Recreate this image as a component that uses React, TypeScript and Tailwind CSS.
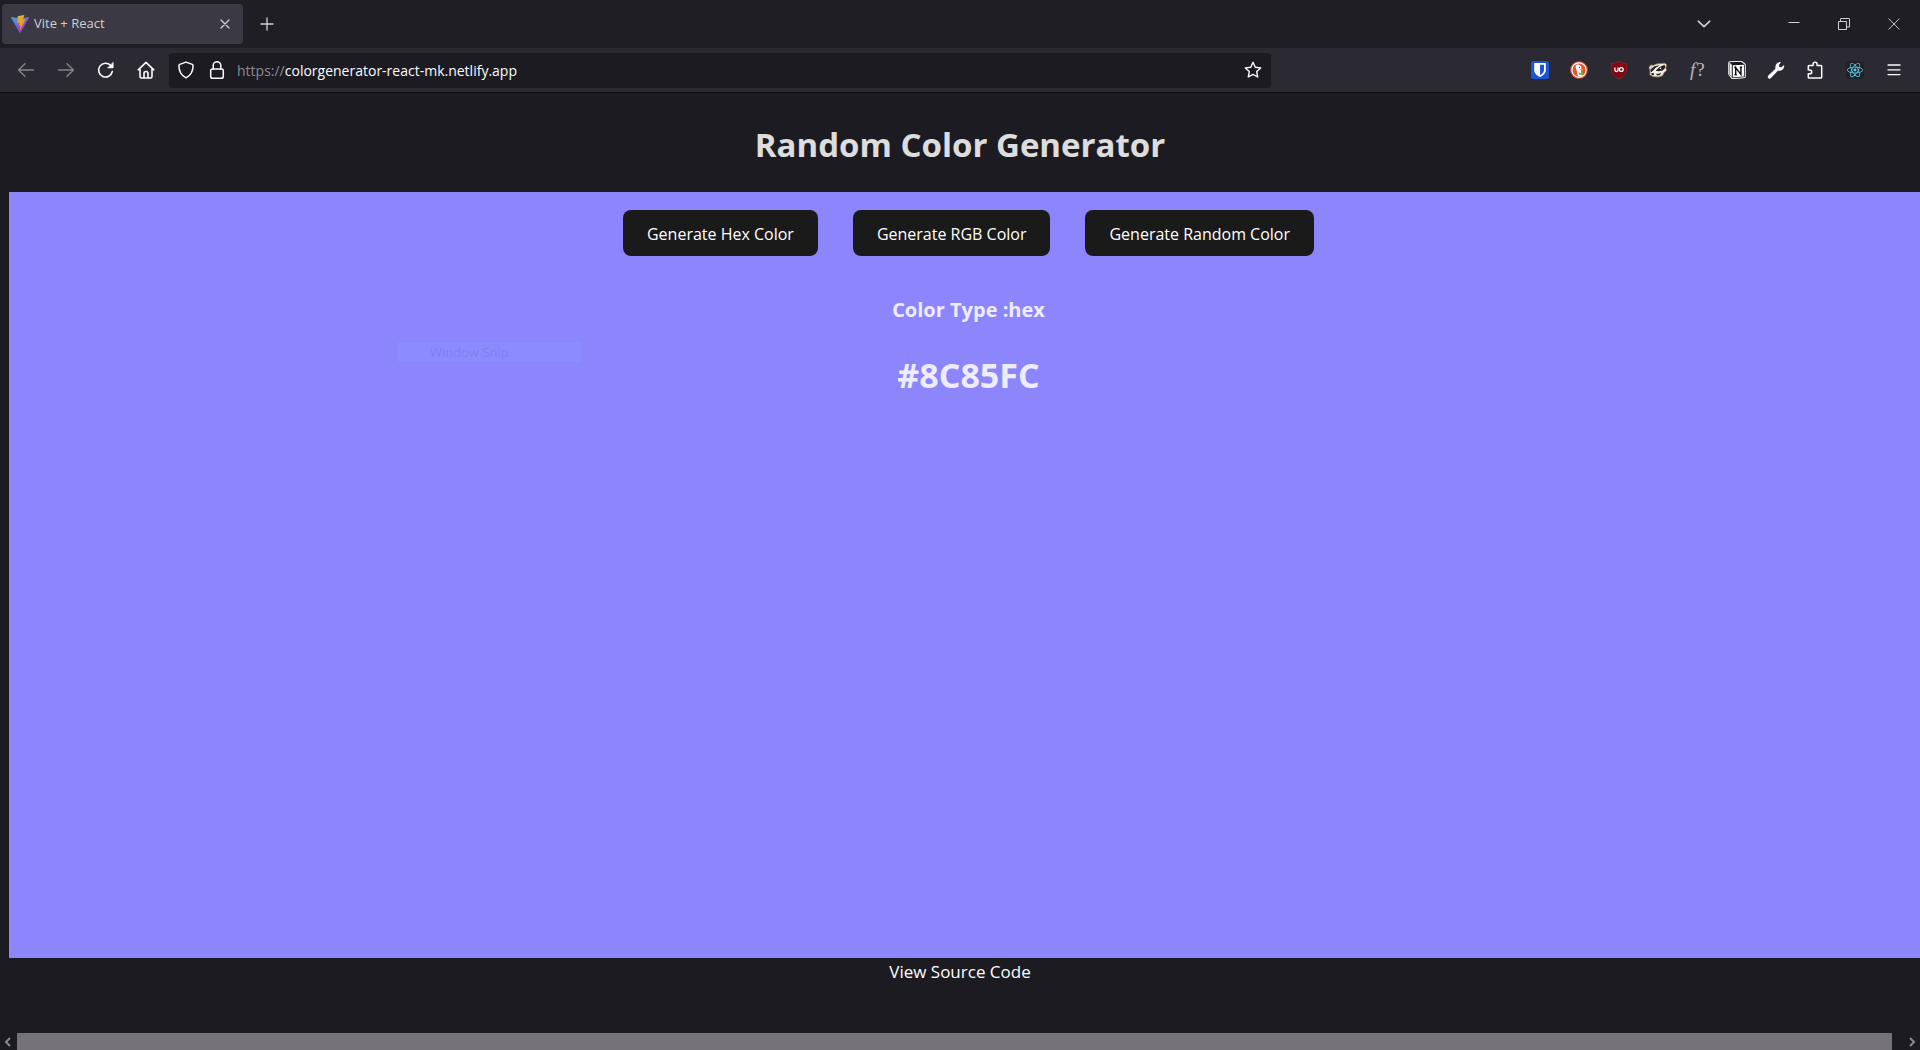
import { useState } from "react";
import type { ReactNode } from "react";
import { SiReact } from "react-icons/si";

type IconButtonProps = { label: string; className?: string; children: ReactNode };

function IconButton({ label, className = "w-9 h-8", children }: IconButtonProps) {
  return (
    <button type="button" aria-label={label} className={`flex shrink-0 items-center justify-center ${className}`}>
      {children}
    </button>
  );
}

const line = {
  width: 18,
  height: 18,
  viewBox: "0 0 18 18",
  fill: "none",
  stroke: "currentColor",
  strokeWidth: 1.4,
  strokeLinecap: "round",
  strokeLinejoin: "round",
} as const;

function ViteLogo() {
  return (
    <svg width="18" height="18" viewBox="0 0 256 257" className="shrink-0" aria-hidden="true">
      <defs>
        <linearGradient id="vite-body" x1="-.8%" x2="57.6%" y1="7.7%" y2="78.4%">
          <stop offset="0%" stopColor="#41a6d6" />
          <stop offset="100%" stopColor="#a03fd0" />
        </linearGradient>
        <linearGradient id="vite-bolt" x1="43.4%" x2="50.3%" y1="2.2%" y2="89%">
          <stop offset="0%" stopColor="#d9bd45" />
          <stop offset="20%" stopColor="#dcae2a" />
          <stop offset="100%" stopColor="#f09020" />
        </linearGradient>
      </defs>
      <path fill="url(#vite-body)" d="M255.153 37.938L134.897 252.976c-2.483 4.44-8.862 4.466-11.382.048L.875 37.958c-2.746-4.814 1.371-10.646 6.827-9.67l120.385 21.517a6.537 6.537 0 0 0 2.322-.004l117.867-21.483c5.438-.991 9.574 4.796 6.877 9.62Z" />
      <path fill="url(#vite-bolt)" d="M185.432.063L96.44 17.501a3.268 3.268 0 0 0-2.634 3.014l-5.474 92.456a3.268 3.268 0 0 0 3.997 3.378l24.777-5.718c2.318-.535 4.413 1.507 3.936 3.838l-7.361 36.047c-.495 2.426 1.782 4.5 4.151 3.78l15.304-4.649c2.372-.72 4.652 1.36 4.15 3.788l-11.698 56.621c-.732 3.542 3.979 5.473 5.943 2.437l1.313-2.028l72.516-144.72c1.215-2.423-.88-5.186-3.54-4.672l-25.505 4.922c-2.396.462-4.435-1.77-3.759-4.114l16.646-57.705c.677-2.35-1.37-4.583-3.769-4.113Z" />
    </svg>
  );
}

function TabBar() {
  return (
    <div className="flex h-12 items-center bg-[#1f1e25] text-[#d0cfd4]">
      <div className="ml-[2px] flex h-10 w-[241px] items-center rounded bg-[#3b3943] pl-[9px] pr-[6px]">
        <ViteLogo />
        <span className="ml-[5px] flex-1 text-[13px]">Vite + React</span>
        <IconButton label="Close tab" className="h-6 w-6">
          <svg width="10" height="10" viewBox="0 0 10 10" fill="none" stroke="currentColor" strokeWidth="1.3" strokeLinecap="round">
            <path d="M1 1l8 8M9 1L1 9" />
          </svg>
        </IconButton>
      </div>
      <IconButton label="New tab" className="ml-[6px] h-9 w-9">
        <svg width="14" height="14" viewBox="0 0 14 14" fill="none" stroke="currentColor" strokeWidth="1.3" strokeLinecap="round">
          <path d="M7 1v12M1 7h12" />
        </svg>
      </IconButton>
      <div className="ml-auto mr-px flex">
        <IconButton label="List all tabs" className="mr-[40px] h-12 w-[50px]">
          <svg width="14" height="8" viewBox="0 0 14 8" fill="none" stroke="currentColor" strokeWidth="1.6" strokeLinecap="round" strokeLinejoin="round">
            <path d="M1.2 1.2L7 6.6l5.800-5.400" />
          </svg>
        </IconButton>
        <IconButton label="Minimize" className="h-12 w-[50px]">
          <svg width="12" height="12" viewBox="0 0 12 12" fill="none" stroke="currentColor">
            <path d="M0.500 4.500h11" />
          </svg>
        </IconButton>
        <IconButton label="Restore" className="h-12 w-[50px]">
          <svg width="12" height="12" viewBox="0 0 12 12" fill="none" stroke="currentColor">
            <path d="M0.500 3.500h8v8h-8zM2.500 3.500v-2.500q0-.5 .5-.5h8q.5 0 .5 .5v8h-3" />
          </svg>
        </IconButton>
        <IconButton label="Close window" className="h-12 w-[50px]">
          <svg width="12" height="12" viewBox="0 0 12 12" fill="none" stroke="currentColor" strokeWidth="0.9">
            <path d="M0.500 0.500l11 11M11.500 0.500l-11 11" />
          </svg>
        </IconButton>
      </div>
    </div>
  );
}

function AddressBar() {
  const [address, setAddress] = useState("colorgenerator-react-mk.netlify.app");
  return (
    <div className="ml-[5px] flex h-[35px] min-w-0 flex-1 items-center rounded bg-[#1c1b22] text-[#fbfbfe]">
      <IconButton label="Tracking protection" className="ml-px h-8 w-8">
        <svg {...line} strokeWidth={1.5}>
          <path d="M9 1.100L15.300 3.400q.8.300.8 1.200C16.100 10 14 14.500 9 16.900 4 14.500 1.900 10 1.900 4.600q0-.9.8-1.200z" />
        </svg>
      </IconButton>
      <IconButton label="Site information" className="h-8 w-[30px]">
        <svg {...line} strokeWidth={1.5}>
          <rect x="2.700" y="8" width="12.600" height="9.200" rx="1.800" />
          <path d="M5.200 8V4.500a3.800 3.800 0 0 1 7.600 0V8" />
        </svg>
      </IconButton>
      <label htmlFor="address" className="ml-[5px] text-[14px] text-[#8b8a91]">https://</label>
      <input
        id="address"
        type="text"
        value={address}
        onChange={(e) => setAddress(e.target.value)}
        className="min-w-0 flex-1 bg-transparent text-[14px] outline-none"
      />
      <IconButton label="Bookmark this page">
        <svg {...line}>
          <path d="M9 1.300l2.250 4.900 5.450.7-4 3.700 1 5.400L9 13.400 4.300 16l1-5.400-4-3.700 5.450-.7z" />
        </svg>
      </IconButton>
    </div>
  );
}

function Extensions() {
  const size = "h-8 w-8";
  return (
    <div className="ml-[253px] mr-[10px] flex w-[386px] shrink-0 justify-between">
      <IconButton label="Bitwarden" className={size}>
        <svg width="18" height="18" viewBox="0 0 18 18">
          <rect width="18" height="18" rx="2.500" fill="#1a56d6" />
          <path d="M3.200 2h11.600v7.200c0 3.400-3.300 5.600-5.800 6.900-2.500-1.300-5.800-3.500-5.800-6.900z" fill="#fff" />
          <path d="M9 3.700h4v5.500c0 2.300-2.300 4-4 4.900z" fill="#1a56d6" />
        </svg>
      </IconButton>
      <IconButton label="DuckDuckGo" className={size}>
        <svg width="18" height="18" viewBox="0 0 18 18">
          <circle cx="9" cy="9" r="8.800" fill="#df5833" />
          <circle cx="9" cy="9" r="7.100" fill="none" stroke="#fff" strokeWidth="1.100" />
          <path d="M5.600 5.500C5.800 3.800 7.300 3.200 8.600 3.600c2.200.4 3 1.900 2.700 4.400l-.3 1.900 1 4.800q-2 1-4 .3z" fill="#fff" />
          <path d="M9 8.300q2-.7 3.700.1-.6 1.200-3 1.200z" fill="#f9b52e" />
          <path d="M8.500 11.300l2 .8 2.200-1v3l-2.200-.7-1.600.5z" fill="#4cba3c" />
          <circle cx="9.500" cy="6.400" r=".7" fill="#2d4f8e" />
        </svg>
      </IconButton>
      <IconButton label="uBlock Origin" className={size}>
        <svg width="18" height="18" viewBox="0 0 18 18">
          <path d="M9 .2c2 1.500 4.500 2.200 7.700 2.300v5.800c0 4.500-3.500 7.500-7.700 9.500-4.200-2-7.700-5-7.700-9.500V2.500C4.500 2.400 7 1.700 9 .2z" fill="#800610" stroke="#a32a30" strokeWidth=".6" />
          <path d="M4.900 6.500v2.500q0 1.500 1.600 1.500T8.100 9V6.500" fill="none" stroke="#fff" strokeWidth="1.300" />
          <circle cx="11.300" cy="8.500" r="1.900" fill="none" stroke="#fff" strokeWidth="1.300" />
        </svg>
      </IconButton>
      <IconButton label="Privacy Badger" className={size}>
        <svg width="20" height="18" viewBox="0 0 20 18">
          <path d="M1 6.500L2.500 4l3 .3L9 2.800l4.500-.3L17 2.200l1.600 1.500-.6 3 .5 2.800-2.500 2.200-1.500 3-4 1.300-5.500-.3-3.300-2.200.4-2.700z" fill="#f3ede3" stroke="#8d7455" strokeWidth=".8" />
          <path d="M2 9l4-3.600L11.500 4l-3 3-5 4.300z" fill="#26221f" />
          <path d="M7.500 9.800L11 6.200l5.500-2.400 1 2.700-2.800 3-4 .8z" fill="#26221f" />
          <path d="M3.500 11.500L8 6.500l6-2.700-5.500 4.500-3.500 4z" fill="#fff" />
          <path d="M2.500 5.200l2.300.3-1.800 1.700z" fill="#caa573" />
          <circle cx="12.500" cy="7.300" r=".8" fill="#fff" />
          <path d="M3 12.500l2.500-.7.500 2.200-2 .2zM8 12.800q3 .6 5-1.300l-1 2.500-3 .6z" fill="#26221f" />
        </svg>
      </IconButton>
      <IconButton label="Font finder" className={`${size} gap-px font-['Liberation_Serif',serif] text-[19px] leading-5 text-[#b8b7bd]`}>
        <span className="italic">f</span>
        <span>?</span>
      </IconButton>
      <IconButton label="Notion Web Clipper" className={size}>
        <svg width="18" height="18" viewBox="0 0 18 18">
          <path d="M2 .7L12.500.3q.8 0 1.400.4l2.700 2.100q.7.500.7 1.400v11.300q0 1.200-1.300 1.300L5 17.600q-.9.100-1.500-.7L1.100 13.800q-.4-.6-.4-1.400V2.100Q.7.800 2 .7z" fill="#17161a" stroke="#e9e8ec" strokeWidth="1.100" />
          <path d="M1.500 1.500L3.800 3.800v12.400L1.500 13z" fill="#f2f2f4" />
          <path d="M4.800 4.300L16 3.800v11.800l-11.200.7z" fill="#fff" />
          <path d="M7.700 13.800V6.600l5.200 6.800V6.200M6.200 6.500h2.200M6.500 13.800h2.300M11.800 6.200h2.400" fill="none" stroke="#111" strokeWidth="1.500" />
        </svg>
      </IconButton>
      <IconButton label="Developer tools" className={size}>
        <svg width="18" height="18" viewBox="0 0 18 18" fill="#fbfbfe">
          <path d="M1.300 14.600L8.500 7.700C7.800 4.600 9.400 1.700 12.900 1.100l1.100.2-2 2.500.3 2.100 2.100.4 2.700-2.400.1 1.400c-.4 3.400-3.300 5.200-6.300 4.500l-6.900 7.200A1.750 1.750 0 0 1 1.300 14.600z" />
        </svg>
      </IconButton>
      <IconButton label="Extensions" className={size}>
        <svg {...line} strokeWidth={1.500}>
          <path d="M2.300 5.200q0-.8.800-.8h4V3.200a2 2 0 0 1 4 0v1.200h3.800q.8 0 .8.800v11q0 .8-.8.800H3.100q-.8 0-.8-.8v-3.400h1.500a1.900 1.900 0 0 0 0-3.800H2.300z" />
        </svg>
      </IconButton>
      <IconButton label="React Developer Tools" className={`${size} text-[#61cdea]`}>
        <span className="flex h-[18px] w-[18px] items-center justify-center rounded-sm bg-[#202228]">
          <SiReact size={16} />
        </span>
      </IconButton>
      <IconButton label="Open application menu" className={size}>
        <svg width="14" height="12" viewBox="0 0 14 12" fill="none" stroke="currentColor" strokeWidth="1.300" strokeLinecap="round">
          <path d="M1 1h12M1 5.800h12M1 10.600h12" />
        </svg>
      </IconButton>
    </div>
  );
}

function Toolbar() {
  return (
    <div className="flex h-[45px] items-center border-b border-[#0d0c12] bg-[#2b2a33] text-[#fbfbfe]">
      <nav aria-label="Browser navigation" className="ml-2 flex gap-1">
        <IconButton label="Back" className="h-8 w-9 text-[#85848a]">
          <svg {...line}><path d="M1.500 9h15M8 2.800L1.500 9 8 15.200" /></svg>
        </IconButton>
        <IconButton label="Forward" className="h-8 w-9 text-[#85848a]">
          <svg {...line}><path d="M16.500 9h-15M10 2.800L16.500 9 10 15.200" /></svg>
        </IconButton>
        <IconButton label="Reload">
          <svg {...line} strokeWidth={1.600}>
            <path d="M15.300 10.500A6.900 6.900 0 1 1 13.600 4.400" />
            <path d="M16.200 1.600v5.300h-5.300z" fill="currentColor" strokeWidth={0.600} />
          </svg>
        </IconButton>
        <IconButton label="Home">
          <svg {...line} strokeWidth={1.600}>
            <path d="M1.200 8.800L9 1.300l7.800 7.500M3 7.500V15.500q0 1.500 1.500 1.500h9q1.500 0 1.500-1.500V7.500M7 17v-4.500a2 2 0 0 1 4 0V17" />
          </svg>
        </IconButton>
      </nav>
      <AddressBar />
      <Extensions />
    </div>
  );
}

const actions = ["Generate Hex Color", "Generate RGB Color", "Generate Random Color"];

function Generator() {
  return (
    <main className="relative ml-[9px] flex flex-1 flex-col items-center bg-[#8c85fc] pl-2 pt-[18px]">
      <div className="flex gap-[35px]">
        {actions.map((action) => (
          <button key={action} type="button" className="h-[46px] rounded-lg bg-[#1a1a1a] px-6 pt-px text-[16px] text-white">
            {action}
          </button>
        ))}
      </div>
      <h3 className="mt-10 text-[20px] leading-7 font-bold text-white/85">Color Type :hex</h3>
      <h1 className="mt-7 text-[34px] leading-[46px] font-bold text-white/85">#8C85FC</h1>
      <div className="absolute left-[389px] top-[150px] w-[183px] bg-[#8c8cff] pl-8 text-[13px] leading-5 text-[#837ff0]">
        Window Snip
      </div>
    </main>
  );
}

function ScrollBar() {
  return (
    <div className="flex h-[17px] items-center bg-[#1c1b22] text-[#8a898e]">
      <IconButton label="Scroll left" className="h-[17px] w-[17px] pr-[2px]">
        <svg width="7" height="10" viewBox="0 0 7 10" fill="none" stroke="currentColor" strokeWidth="2"><path d="M6 1L2 5l4 4" /></svg>
      </IconButton>
      <div className="h-full flex-1 bg-[#757378]" />
      <IconButton label="Scroll right" className="ml-[11px] h-[17px] w-[17px] pl-[2px]">
        <svg width="7" height="10" viewBox="0 0 7 10" fill="none" stroke="currentColor" strokeWidth="2"><path d="M1 1l4 4-4 4" /></svg>
      </IconButton>
    </div>
  );
}

export default function App() {
  return (
    <div className="flex min-h-screen flex-col bg-[#1c1b22] font-['Open_Sans',sans-serif]">
      <TabBar />
      <Toolbar />
      <header className="pb-[25px] pt-[29px] text-center">
        <h1 className="text-[33px] leading-[45px] font-bold text-white/85">Random Color Generator</h1>
      </header>
      <Generator />
      <footer className="pb-[47px] text-center text-[17px] leading-7 text-white">
        <a href="#source">View Source Code</a>
      </footer>
      <ScrollBar />
    </div>
  );
}
